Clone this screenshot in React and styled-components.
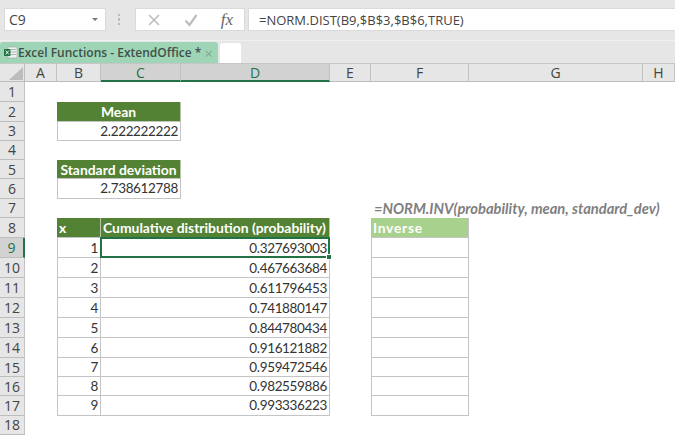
import React from 'react';
import styled, { createGlobalStyle } from 'styled-components';

const GlobalStyle = createGlobalStyle`
    html, body {
        margin: 0;
        padding: 0;
        width: 675px;
        height: 435px;
        overflow: hidden;
        background: #fff;
        font-family: Lato, "Open Sans", sans-serif;
    }
    * { box-sizing: border-box; }
`;

const Page = styled.div`
    width: 675px;
    height: 435px;
    display: flex;
    flex-direction: column;
    overflow: hidden;
    background: #fff;
`;

const FormulaBar = styled.div`
    height: 41px;
    padding: 8px 0 0 4px;
    display: flex;
    align-items: flex-start;
    background: #e6e6e6;
    border-bottom: 1px solid #f0f0f0;
`;

const NameBox = styled.div`
    width: 102px;
    height: 23px;
    padding: 0 7px 0 4px;
    display: flex;
    align-items: center;
    justify-content: space-between;
    background: #fff;
    border: 1px solid #dadada;
    font-family: "Open Sans", sans-serif;
    font-size: 14px;
    color: #444;
`;

const Caret = styled.span`
    width: 0;
    height: 0;
    border-left: 3px solid transparent;
    border-right: 3px solid transparent;
    border-top: 3px solid #777;
`;

const Grip = styled.div`
    width: 2px;
    height: 11px;
    margin: 6px 15px 0 12px;
    background: repeating-linear-gradient(#bbb 0 2px, transparent 2px 4.5px);
`;

const FxButtons = styled.div`
    width: 110px;
    height: 23px;
    margin-right: 3px;
    padding: 0 11px 0 11px;
    display: flex;
    align-items: center;
    justify-content: space-between;
    background: #fff;
    border: 1px solid #dadada;
`;

const Fx = styled.span`
    font-family: "Liberation Serif", serif;
    font-style: italic;
    font-size: 17px;
    color: #666;
`;

const FormulaInput = styled.div`
    flex: 1;
    height: 23px;
    padding-left: 10px;
    display: flex;
    align-items: center;
    background: #fff;
    border: 1px solid #dadada;
    border-right: 0;
    font-family: "Open Sans", sans-serif;
    font-size: 13px;
    color: #444;
`;

const TabStrip = styled.div`
    height: 22px;
    display: flex;
    align-items: flex-end;
    gap: 2px;
    background: #e6e6e6;
`;

const Tab = styled.div`
    width: 218px;
    height: 21px;
    padding: 0 5px 0 4px;
    display: flex;
    align-items: center;
    background: #9fd5b7;
    border-radius: 3px 3px 0 0;
    font-family: "Open Sans", sans-serif;
    font-size: 12px;
    font-weight: 600;
    color: #3f5048;
    white-space: nowrap;
`;

const TabName = styled.span`
    margin-left: 1px;
    flex: 1;
`;

const TabClose = styled.span`
    font-size: 15px;
    font-weight: 400;
    color: #82a894;
`;

const NewTab = styled.div`
    width: 21px;
    height: 20px;
    background: #fff;
    border-radius: 3px 3px 0 0;
`;

const Sheet = styled.div`
    flex: 1;
    display: grid;
    grid-template-columns: 25px 32px 44px 80px 149px 41px 98px 174px 32px;
    grid-template-rows: 19px 20px 20px 18.5px 19.5px 19px 19.5px 19.5px 20px 20px 20px 20px 20px 20px 20px 19px 19px 19.5px 19px;
    font-size: 13.5px;
    color: #333;
`;

const Corner = styled.div`
    grid-column: 1;
    grid-row: 1;
    padding: 3px 2px 2px 9px;
    display: flex;
    background: #e6e6e6;
    border-top: 1px solid #c6c6c6;
    border-right: 1px solid #bdbdbd;
    border-bottom: 1px solid #bdbdbd;
`;

const CornerMark = styled.div`
    width: 0;
    height: 0;
    border-left: 14px solid transparent;
    border-bottom: 13px solid #bcbcbc;
`;

const ColHead = styled.div`
    grid-row: 1;
    display: flex;
    align-items: center;
    justify-content: center;
    background: ${p => (p.$active ? '#d2d2d2' : '#e6e6e6')};
    color: ${p => (p.$active ? '#217346' : '#444')};
    border-top: 1px solid #c6c6c6;
    border-right: 1px solid #c2c2c2;
    border-bottom: ${p => (p.$active ? '2px solid #217346' : '1px solid #bdbdbd')};
    font-family: "Open Sans", sans-serif;
    font-size: 14px;
`;

const RowHead = styled.div`
    grid-column: 1;
    display: flex;
    align-items: center;
    justify-content: center;
    background: ${p => (p.$active ? '#d2d2d2' : '#e6e6e6')};
    color: ${p => (p.$active ? '#217346' : '#444')};
    border-right: ${p => (p.$active ? '2px solid #217346' : '1px solid #c2c2c2')};
    border-bottom: 1px solid #bdbdbd;
    font-family: "Open Sans", sans-serif;
    font-size: 14px;
`;

const Cell = styled.div`
    padding: 0 2px;
    display: flex;
    align-items: center;
    justify-content: flex-end;
    background: #fff;
    border-right: 1px solid #c4c4c4;
    border-bottom: 1px solid #c4c4c4;
    border-left: ${p => (p.$first ? '1px solid #c4c4c4' : '0')};
    letter-spacing: -0.35px;
    white-space: nowrap;
`;

const HeadCell = styled.div`
    padding: 0 2px;
    display: flex;
    align-items: center;
    justify-content: ${p => (p.$center ? 'center' : 'flex-start')};
    background: ${p => (p.$light ? '#a9d18e' : '#548235')};
    color: #fff;
    font-weight: 700;
    font-size: 13.9px;
    letter-spacing: ${p => (p.$light ? '0.7px' : '0')};
    white-space: nowrap;
    border-right: 1px solid ${p => (p.$light ? '#c4c4c4' : '#b5c7a8')};
    border-bottom: 1px solid #c4c4c4;
`;

const SelectedCell = styled(Cell)`
    position: relative;
    margin: -1px 0 0 -1px;
    border: 2px solid #217346;
    padding-right: 1px;
`;

const FillHandle = styled.span`
    position: absolute;
    right: -4px;
    bottom: -4px;
    width: 6px;
    height: 6px;
    background: #217346;
    border: 1px solid #fff;
`;

const Note = styled.div`
    padding: 0 0 0 3px;
    display: flex;
    align-items: center;
    font-style: italic;
    font-weight: 700;
    font-size: 14.7px;
    color: #7f7f7f;
    white-space: nowrap;
`;

const columns = ['A', 'B', 'C', 'D', 'E', 'F', 'G', 'H'];
const rows = Array.from({ length: 18 }, (_, i) => i + 1);
const values = [
    '0.327693003', '0.467663684', '0.611796453', '0.741880147', '0.844780434',
    '0.916121882', '0.959472546', '0.982559886', '0.993336223'
];

// sheet row n sits on grid line n + 1 because of the column header row
const at = (col, row) => ({ gridColumn: col, gridRow: row + 1 });

const CloseIcon = () => (
    <svg width="14" height="14" viewBox="0 0 14 14">
        <path d="M2 2 L12 12 M12 2 L2 12" stroke="#bdbdbd" strokeWidth="1.6" fill="none" />
    </svg>
);

const CheckIcon = () => (
    <svg width="14" height="14" viewBox="0 0 14 14">
        <path d="M1.5 7.5 L5.5 12 L12.5 2" stroke="#bdbdbd" strokeWidth="2.2" fill="none" />
    </svg>
);

const BookIcon = () => (
    <svg width="13" height="13" viewBox="0 0 13 13" style={{ flexShrink: 0 }}>
        <rect x="4" y="1" width="9" height="11" fill="#eef3ef" stroke="#9aa5a0" strokeWidth="0.6" />
        <path d="M7 3.5 H12 M7 6 H12 M7 8.5 H12" stroke="#9aa5a0" strokeWidth="0.8" />
        <rect x="0" y="3" width="6.5" height="7" fill="#217346" />
        <path d="M1.7 4.6 L4.8 8.4 M4.8 4.6 L1.7 8.4" stroke="#fff" strokeWidth="0.9" />
    </svg>
);

const App = () => (
    <Page>
        <GlobalStyle />
        <FormulaBar>
            <NameBox>C9<Caret /></NameBox>
            <Grip />
            <FxButtons>
                <CloseIcon />
                <CheckIcon />
                <Fx>fx</Fx>
            </FxButtons>
            <FormulaInput>=NORM.DIST(B9,$B$3,$B$6,TRUE)</FormulaInput>
        </FormulaBar>
        <TabStrip>
            <Tab>
                <BookIcon />
                <TabName>Excel Functions - ExtendOffice *</TabName>
                <TabClose>×</TabClose>
            </Tab>
            <NewTab />
        </TabStrip>
        <Sheet>
            <Corner><CornerMark /></Corner>
            {columns.map((c, i) => (
                <ColHead key={c} $active={c === 'C' || c === 'D'} style={{ gridColumn: i + 2 }}>{c}</ColHead>
            ))}
            {rows.map(r => (
                <RowHead key={r} $active={r === 9} style={{ gridRow: r + 1 }}>{r}</RowHead>
            ))}

            <HeadCell $center style={at('3 / 5', 2)}>Mean</HeadCell>
            <Cell $first style={at('3 / 5', 3)}>2.222222222</Cell>

            <HeadCell $center style={at('3 / 5', 5)}>Standard deviation</HeadCell>
            <Cell $first style={at('3 / 5', 6)}>2.738612788</Cell>

            <Note style={at('7 / 10', 7)}>=NORM.INV(probability, mean, standard_dev)</Note>

            <HeadCell style={at(3, 8)}>x</HeadCell>
            <HeadCell style={at('4 / 6', 8)}>Cumulative distribution (probability)</HeadCell>
            <HeadCell $light style={at(7, 8)}>Inverse</HeadCell>

            {values.map((v, i) => (
                <React.Fragment key={v}>
                    <Cell $first style={at(3, i + 9)}>{i + 1}</Cell>
                    {i === 0 ? (
                        <SelectedCell style={at('4 / 6', 9)}>{v}<FillHandle /></SelectedCell>
                    ) : (
                        <Cell style={at('4 / 6', i + 9)}>{v}</Cell>
                    )}
                    <Cell $first style={at(7, i + 9)} />
                </React.Fragment>
            ))}
        </Sheet>
    </Page>
);

export default App;
